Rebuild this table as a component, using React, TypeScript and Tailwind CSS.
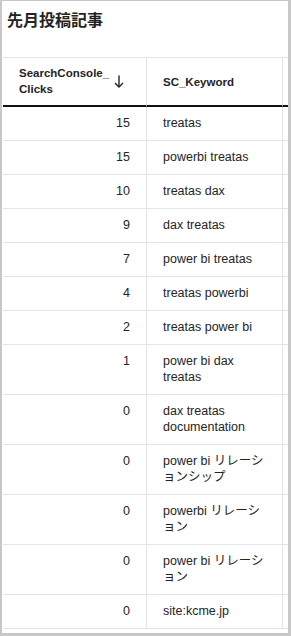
import React from "react";

const rows: [string, string][] = [
  ["15", "treatas"],
  ["15", "powerbi treatas"],
  ["10", "treatas dax"],
  ["9", "dax treatas"],
  ["7", "power bi treatas"],
  ["4", "treatas powerbi"],
  ["2", "treatas power bi"],
  ["1", "power bi dax treatas"],
  ["0", "dax treatas documentation"],
  ["0", "power bi リレーションシップ"],
  ["0", "powerbi リレーション"],
  ["0", "power bi リレーション"],
  ["0", "site:kcme.jp"],
];

const SortDown = () => (
  <svg width="10" height="13" viewBox="0 0 10 13" fill="none" className="shrink-0">
    <path d="M5 0.5V12" stroke="#252423" strokeWidth="1.4" />
    <path d="M1 8L5 12L9 8" stroke="#252423" strokeWidth="1.4" />
  </svg>
);

export default function App() {
  return (
    <div
      className="w-[291px] h-[636px] bg-white border-t border-l-2 border-r-[3px] border-b-[3px] border-[#c8c8c8] overflow-hidden text-[#252423]"
      style={{ fontFamily: '"Liberation Sans", "Noto Sans CJK JP", sans-serif' }}
    >
      {/* Title */}
      <div className="pl-[5px] pt-[7px] h-[56px]">
        <h1 className="text-[16px] leading-[22px] font-bold" style={{ fontFamily: '"Noto Sans CJK JP", sans-serif' }}>
          先月投稿記事
        </h1>
      </div>

      {/* Table */}
      <div className="ml-[1px] w-[320px] grid grid-cols-[144px_136px_40px] text-[12.5px] leading-4">
        <div className="border-t border-r border-[#e1e4ea] border-b-2 border-b-[#111] pl-4 pr-[22px] pt-[7px] pb-2 flex items-center justify-between font-bold text-[11.5px]">
          <span>
            SearchConsole_
            <br />
            Clicks
          </span>
          <SortDown />
        </div>
        <div className="border-t border-r border-[#e1e4ea] border-b-2 border-b-[#111] pl-4 pr-3 flex items-center font-bold text-[11.5px]">
          SC_Keyword
        </div>
        <div className="border-t border-[#e1e4ea] border-b-2 border-b-[#111]" />

        {rows.map(([n, k], i) => (
          <React.Fragment key={i}>
            <div className="border-b border-r border-[#e1e4ea] pr-4 pt-2 pb-[9px] text-right">{n}</div>
            <div className="border-b border-r border-[#e1e4ea] pl-4 pr-[15px] pt-2 pb-[9px]">{k}</div>
            <div className="border-b border-[#e1e4ea]" />
          </React.Fragment>
        ))}
      </div>
    </div>
  );
}
